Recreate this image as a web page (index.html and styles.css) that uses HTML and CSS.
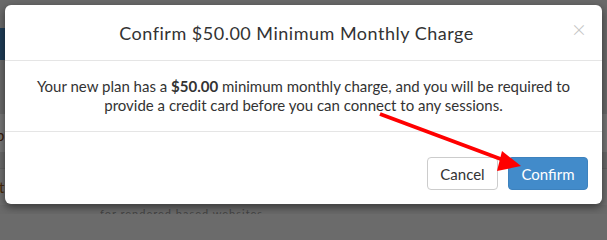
FILE: index.html
```html
<!DOCTYPE html>
<html>
<head>
<meta charset="utf-8">
<link rel="stylesheet" href="styles.css">
</head>
<body>
<div class="backdrop">
  <div class="bg-strip bg-blue"></div>
  <div class="bg-strip bg-p"><span>p</span></div>
  <div class="bg-strip bg-t"><span>t</span></div>
  <div class="bg-bottom">for rendered based websites</div>
</div>
<div class="modal">
  <div class="modal-header">
    <h4 class="modal-title">Confirm $50.00 Minimum Monthly Charge</h4>
    <span class="close">&times;</span>
  </div>
  <div class="modal-body">
    <p>Your new plan has a <strong>$50.00</strong> minimum monthly charge, and you will be required to provide a credit card before you can connect to any sessions.</p>
  </div>
  <div class="modal-footer">
    <button class="btn btn-default">Cancel</button>
    <button class="btn btn-primary">Confirm</button>
  </div>
</div>
<svg class="arrow" width="607" height="214" viewBox="0 0 607 214">
  <line x1="380" y1="114" x2="506" y2="161" stroke="#f00" stroke-width="4" stroke-linecap="butt"/>
  <polygon points="502,151 497,171 521,166" fill="#f00"/>
</svg>
</body>
</html>
```
FILE: styles.css
```css
html, body {
  margin: 0;
  padding: 0;
  width: 607px;
  height: 214px;
  overflow: hidden;
  background: #6b6b6b;
  font-family: Lato, "Noto Sans", sans-serif;
  position: relative;
}
.backdrop {
  position: absolute;
  inset: 0;
  background: #6a6a6a;
}
.bg-strip {
  position: absolute;
  left: 0;
  width: 607px;
}
.bg-blue {
  top: 28px;
  height: 32px;
  background: #1f3d57;
  width: 20px;
}
.bg-p {
  top: 114px;
  height: 38px;
  background: #777;
  color: #3a1a0a;
  font-size: 15px;
}
.bg-p span { position: absolute; left: -4px; top: 12px; }
.bg-t {
  top: 168px;
  height: 36px;
  background: #6f6f6f;
  border-top: 1px solid #626262;
  color: #4a2a0a;
  font-size: 15px;
}
.bg-t span { position: absolute; left: -1px; top: 9px; }
.bg-bottom {
  position: absolute;
  left: 100px;
  top: 207px;
  color: #2a2a2a;
  font-size: 11px;
  letter-spacing: 1px;
  opacity: 0.6;
}
.modal {
  position: absolute;
  left: 5px;
  top: 5px;
  width: 597px;
  height: 199px;
  background: #fff;
  border-radius: 6px;
  box-shadow: 0 3px 9px rgba(0,0,0,0.5);
  color: #333;
  display: flex;
  flex-direction: column;
}
.modal-header {
  position: relative;
  height: 55px;
  border-bottom: 1px solid #e5e5e5;
  display: flex;
  align-items: center;
  justify-content: center;
}
.modal-title {
  margin: 0;
  font-size: 18px;
  font-weight: 400;
  color: #333;
  letter-spacing: 0.5px;
  padding-right: 14px;
}
.close {
  position: absolute;
  right: 16px;
  top: 12px;
  font-size: 24px;
  line-height: 1;
  color: #c4c4c4;
  font-weight: 300;
}
.modal-body {
  padding: 16px 20px 14px;
  height: 40px;
  border-bottom: 1px solid #e5e5e5;
  text-align: center;
}
.modal-body p {
  margin: 0;
  font-size: 15px;
  line-height: 19px;
  color: #333;
  letter-spacing: 0;
}
.modal-body strong { font-weight: 700; }
.modal-footer {
  display: flex;
  justify-content: flex-end;
  gap: 10px;
  padding: 25px 14px 0 0;
}
.btn {
  height: 33px;
  border-radius: 4px;
  font-family: Lato, "Noto Sans", sans-serif;
  font-size: 15px;
  padding: 0;
  border: 1px solid #ccc;
  background: #fff;
  color: #333;
}
.btn-default { width: 71px; }
.btn-primary {
  width: 80px;
  background: #428bca;
  border-color: #3d82be;
  color: #fff;
}
.arrow {
  position: absolute;
  left: 0;
  top: 0;
}
```
